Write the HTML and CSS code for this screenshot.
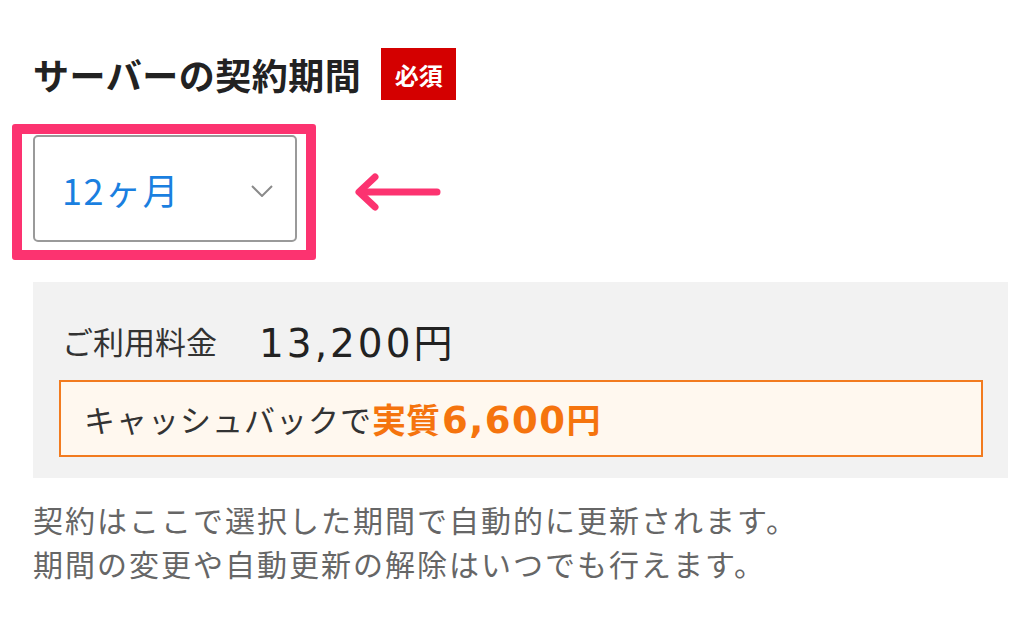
FILE: index.html
```html
<!DOCTYPE html>
<html lang="ja">
<head>
    <meta charset="UTF-8">
    <meta name="viewport" content="width=device-width, initial-scale=1.0">
    <title>サーバーの契約期間</title>
    <link rel="stylesheet" href="styles.css">
</head>
<body>
    <div class="page">
        <!-- Heading with required badge -->
        <div class="field-head">
            <h2 class="field-title">サーバーの契約期間</h2>
            <span class="badge">必須</span>
        </div>

        <!-- Period selector, highlighted -->
        <div class="select-row">
            <div class="highlight">
                <div class="select">
                    <span class="select-value">12ヶ月</span>
                    <svg class="chevron" width="22" height="12" viewBox="0 0 22 12">
                        <polyline points="1,1 11,11 21,1" fill="none" stroke="#8a8a8a" stroke-width="2"/>
                    </svg>
                </div>
            </div>
            <svg class="arrow" width="88" height="40" viewBox="0 0 88 40">
                <line x1="84" y1="20" x2="8" y2="20" stroke="#fc3370" stroke-width="7" stroke-linecap="round"/>
                <polyline points="22,5 6,20 22,35" fill="none" stroke="#fc3370" stroke-width="7" stroke-linecap="round" stroke-linejoin="round"/>
            </svg>
        </div>

        <!-- Price panel -->
        <div class="price-panel">
            <div class="price-row">
                <span class="price-label">ご利用料金</span>
                <span class="price-value">13,200<span class="yen">円</span></span>
            </div>
            <div class="cashback">
                キャッシュバックで<strong>実質<span class="num">6,600</span>円</strong>
            </div>
        </div>

        <p class="note">
            契約はここで選択した期間で自動的に更新されます。<br>
            期間の変更や自動更新の解除はいつでも行えます。
        </p>
    </div>
</body>
</html>
```

FILE: styles.css
```css
/* CSS styles */
body {
    font-family: 'Noto Sans CJK JP', 'Noto Sans', sans-serif;
    background-color: #fff;
    color: #333;
    margin: 0;
    padding: 0;
}

.page {
    padding: 48px 16px 0 33px;
}

.field-head {
    display: flex;
    align-items: center;
    gap: 20px;
}

.field-title {
    margin: 0;
    font-size: 36px;
    font-weight: bold;
    line-height: 52px;
    color: #222;
    letter-spacing: 0.5px;
}

.badge {
    display: flex;
    align-items: center;
    justify-content: center;
    width: 75px;
    height: 52px;
    background-color: #d40000;
    color: #fff;
    font-size: 24px;
    font-weight: bold;
}

.select-row {
    display: flex;
    align-items: center;
    gap: 37px;
    margin-top: 24px;
    margin-left: -21px;
}

.highlight {
    border: 10px solid #fc3370;
    border-radius: 3px;
    padding: 1px 9px 8px 11px;
}

.select {
    box-sizing: border-box;
    width: 264px;
    height: 107px;
    border: 2px solid #9a9a9a;
    border-radius: 5px;
    display: flex;
    align-items: center;
    justify-content: space-between;
    padding: 0 22px 0 27px;
}

.select-value {
    font-size: 36px;
    color: #1a7fe0;
    letter-spacing: 1.5px;
}

.chevron {
    margin-top: 4px;
}

.price-panel {
    width: 975px;
    box-sizing: border-box;
    background-color: #f2f2f2;
    margin-top: 22px;
    padding: 30px 25px 21px 26px;
}

.price-row {
    display: flex;
    align-items: center;
    height: 56px;
    padding-left: 3px;
    margin-bottom: 12px;
}

.price-label {
    font-size: 31px;
    width: 197px;
}

.price-value {
    font-family: 'DejaVu Sans', 'Noto Sans CJK JP', sans-serif;
    font-size: 39px;
    letter-spacing: 3px;
    color: #222;
}

.price-value .yen {
    font-family: 'Noto Sans CJK JP', sans-serif;
    letter-spacing: 0;
}

.cashback {
    box-sizing: border-box;
    height: 77px;
    border: 2px solid #f27b1f;
    background-color: #fff8ef;
    display: flex;
    align-items: center;
    padding-left: 23px;
    font-size: 31px;
    letter-spacing: 1px;
}

.cashback strong {
    color: #f5740e;
    font-weight: bold;
    font-size: 34px;
    letter-spacing: 0;
}

.cashback .num {
    font-family: 'DejaVu Sans', sans-serif;
    font-size: 37px;
    letter-spacing: 1.5px;
    padding-left: 2px;
}

.note {
    margin: 19px 0 0;
    font-size: 30px;
    line-height: 44px;
    color: #666;
    letter-spacing: 2px;
}
```
